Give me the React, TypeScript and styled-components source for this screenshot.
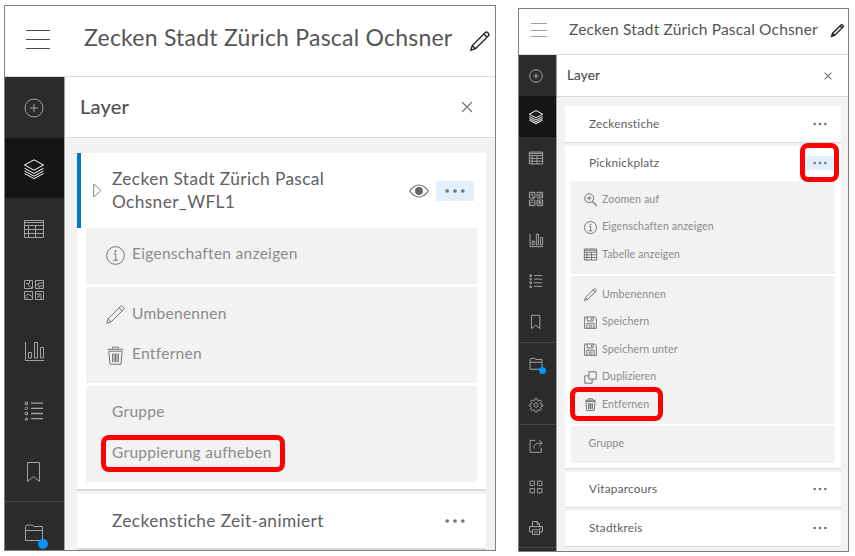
import React from "react";
import styled, { createGlobalStyle, css, ThemeProvider } from "styled-components";

const GlobalStyle = createGlobalStyle`
  * { box-sizing: border-box; }
  body { margin: 0; background: #fff; font-family: "Lato", sans-serif; overflow: hidden; }
`;

/* ---------- size sets for the two windows ---------- */

const large = {
  width: 492, height: 546,
  header: 71, headerPad: "0 5px 0 21px", titleGap: 34, titleSize: 23, titleTrack: 0.23, titleRaise: 7,
  burgerW: 24, burgerGap: 8, burgerDrop: 4, pencil: 20, pencilDrop: 3, burger: "#4a4a4a",
  rail: 60, cell: 60.6, cellPad: "2px 2px 0 0", railIcon: 20, dot: 10,
  panelHead: 61, panelPad: "0 22px 0 15px", headSize: 20, headTrack: 0.24, close: 12, headRaise: 2,
  listPad: "15px 9px 0 12px", cardGap: 3, cardEdge: 2,
  cardSize: 17.3, cardTrack: 0.38, cardLine: 22.5,
  textInset: 35, cardRight: 12, moreW: 38, moreH: 20, dots: 18,
  menuMargin: "0 9px 7px", sectionGap: 3, row: 40.5,
  itemSize: 15.5, itemTrack: 0.29, itemIcon: 19, iconInset: 20, iconGap: 7, plainInset: 26, iconDrop: 4,
};

const small: typeof large = {
  width: 331, height: 544,
  header: 46, headerPad: "0 4px 0 12px", titleGap: 22, titleSize: 15.5, titleTrack: 0.17, titleRaise: 4,
  burgerW: 16, burgerGap: 5.5, burgerDrop: 1, pencil: 13, pencilDrop: 1, burger: "#a0a0a0",
  rail: 38, cell: 41, cellPad: "0 4px 0 0", railIcon: 14, dot: 7,
  panelHead: 42, panelPad: "0 16px 0 10px", headSize: 13.5, headTrack: 0.14, close: 8, headRaise: 0,
  listPad: "9px 7px 0 8px", cardGap: 3, cardEdge: 1,
  cardSize: 11.8, cardTrack: 0.23, cardLine: 16,
  textInset: 24, cardRight: 8, moreW: 26, moreH: 14, dots: 14,
  menuMargin: "0 6px 5px", sectionGap: 2, row: 27.5,
  itemSize: 10.6, itemTrack: 0.13, itemIcon: 13, iconInset: 13, iconGap: 5, plainInset: 17.5, iconDrop: 2,
};

declare module "styled-components" {
  export interface DefaultTheme extends Record<string, any> {}
}

/* ---------- layout ---------- */

const Page = styled.div`
  display: flex;
  gap: 22px;
  padding-left: 4px;
  width: 855px;
  height: 556px;
`;

const Window = styled.section<{ $top: number }>`
  position: relative;
  display: flex;
  flex-direction: column;
  flex: none;
  width: ${p => p.theme.width}px;
  height: ${p => p.theme.height}px;
  margin-top: ${p => p.$top}px;
  border: 1px solid #7f7f7f;
  overflow: hidden;
`;

const Header = styled.header`
  display: flex;
  align-items: center;
  flex: none;
  height: ${p => p.theme.header}px;
  padding: ${p => p.theme.headerPad};
  padding-bottom: ${p => p.theme.titleRaise}px;
  border-bottom: 1px solid #dcdcdc;
`;

const Burger = styled.div`
  display: flex;
  flex-direction: column;
  gap: ${p => p.theme.burgerGap}px;
  width: ${p => p.theme.burgerW}px;
  margin-top: ${p => p.theme.burgerDrop}px;
  margin-right: ${p => p.theme.titleGap}px;
`;

const BurgerLine = styled.span`
  height: 1px;
  background: ${p => p.theme.burger};
`;

const Title = styled.h1`
  margin: 0 auto 0 0;
  font-size: ${p => p.theme.titleSize}px;
  font-weight: 400;
  line-height: 1.2;
  letter-spacing: ${p => p.theme.titleTrack}px;
  color: #555;
  white-space: nowrap;
`;

const TitleIcon = styled.span`
  display: flex;
  margin-top: ${p => p.theme.pencilDrop * 2}px;
  color: #222;
`;

const Body = styled.div`
  display: flex;
  flex: 1;
  min-height: 0;
`;

const Rail = styled.nav`
  flex: none;
  width: ${p => p.theme.rail}px;
  border-right: 1px solid #a3a3a3;
  background: #2b2b2b;
  overflow: hidden;
`;

const RailGroup = styled.div`
  & + & { border-top: 1px solid #474747; margin-bottom: -1px; }
`;

const RailCell = styled.div<{ $active?: boolean }>`
  display: flex;
  align-items: center;
  justify-content: center;
  height: ${p => p.theme.cell}px;
  padding: ${p => p.theme.cellPad};
  color: #a2a2a2;
  ${p => p.$active && css`background: #151515; color: #fff;`}
`;

const IconSlot = styled.span`
  position: relative;
  display: flex;
`;

const NoticeDot = styled.i`
  position: absolute;
  left: 74%;
  top: 76%;
  width: ${p => p.theme.dot}px;
  height: ${p => p.theme.dot}px;
  border-radius: 50%;
  background: #0095f6;
`;

const Panel = styled.main`
  display: flex;
  flex-direction: column;
  flex: 1;
  min-width: 0;
  background: #f2f2f2;
`;

const PanelHeader = styled.div`
  display: flex;
  align-items: center;
  justify-content: space-between;
  flex: none;
  height: ${p => p.theme.panelHead}px;
  padding: ${p => p.theme.panelPad};
  border-bottom: 1px solid #dcdcdc;
  background: #fff;
  color: #777;
`;

const PanelTitle = styled.h2`
  margin: 0;
  padding-bottom: ${p => p.theme.headRaise}px;
  font-size: ${p => p.theme.headSize}px;
  font-weight: 400;
  -webkit-text-stroke: 0.2px #505050;
  line-height: 1.2;
  letter-spacing: ${p => p.theme.headTrack}px;
  color: #505050;
`;

const List = styled.div`
  display: flex;
  flex-direction: column;
  gap: ${p => p.theme.cardGap}px;
  padding: ${p => p.theme.listPad};
`;

const Card = styled.article`
  flex: none;
  background: #fff;
  border-bottom: ${p => p.theme.cardEdge}px solid #dadada;
`;

const CardRow = styled.div<{ $h: number; $current?: boolean }>`
  display: flex;
  align-items: center;
  height: ${p => p.$h}px;
  padding-right: ${p => p.theme.cardRight}px;
  ${p => p.$current && css`border-left: 4px solid #0079c1;`}
`;

const Lead = styled.span<{ $indent: number }>`
  display: flex;
  flex: none;
  width: ${p => p.theme.textInset - p.$indent}px;
  padding-left: ${p => (p.$indent ? 12 : 0)}px;
`;

const CardLabel = styled.div`
  flex: 1;
  font-size: ${p => p.theme.cardSize}px;
  line-height: ${p => p.theme.cardLine}px;
  letter-spacing: ${p => p.theme.cardTrack}px;
  color: #606060;
  white-space: nowrap;
`;

const Eye = styled.span`
  display: flex;
  margin-right: 7px;
  padding-top: 1px;
`;

const More = styled.button<{ $on?: boolean }>`
  display: flex;
  align-items: center;
  justify-content: center;
  width: ${p => p.theme.moreW}px;
  height: ${p => p.theme.moreH}px;
  padding: 0;
  border: 0;
  background: ${p => (p.$on ? "#e1effa" : "transparent")};
`;

const Menu = styled.div`
  display: flex;
  flex-direction: column;
  gap: ${p => p.theme.sectionGap}px;
  margin: ${p => p.theme.menuMargin};
`;

const Section = styled.div<{ $h: number; $pad: number }>`
  height: ${p => p.$h}px;
  padding-top: ${p => p.$pad}px;
  background: #f2f2f2;
`;

const Item = styled.div<{ $plain?: boolean }>`
  display: flex;
  align-items: center;
  gap: ${p => p.theme.iconGap}px;
  height: ${p => p.theme.row}px;
  padding-left: ${p => (p.$plain ? p.theme.plainInset : p.theme.iconInset)}px;
  font-size: ${p => p.theme.itemSize}px;
  letter-spacing: ${p => p.theme.itemTrack}px;
  color: #8b8b8b;
  white-space: nowrap;
`;

const ItemIcon = styled.span`
  display: flex;
  padding-top: ${p => p.theme.iconDrop}px;
  color: #757575;
`;

const Marker = styled.div<{ $x: number; $y: number; $w: number; $h: number }>`
  position: absolute;
  left: ${p => p.$x}px;
  top: ${p => p.$y}px;
  width: ${p => p.$w}px;
  height: ${p => p.$h}px;
  border: 5px solid #fe0000;
  border-radius: 8px;
`;

/* ---------- icons, on a 20-unit grid ---------- */

const Svg = styled.svg`
  display: block;
  overflow: visible;
  fill: none;
  stroke: currentColor;
`;

const shapes: Record<string, React.ReactNode> = {
  add: <><circle cx="10" cy="10" r="9" /><path d="M10 6v8M6 10h8" /></>,
  layers: <><path d="M10 .8 19.5 6 10 11.200.5 6z" /><path d="M.5 9.300 10 14.500l9.500-5.200M.5 12 10 17.200 19.500 12M.5 14.500 10 19.600l9.500-5.100" /></>,
  table: <path d="M.5 1.500h19v17H.5zM.5 6.500h19M.5 10.500h19M.5 14.500h19M4.500 6.500v12M11.500 6.500v12M.5 3.500h19" />,
  basemap: <><path d="M.5.5h8v8h-8zM11.500.5h8v8h-8zM.5 11.500h8v8h-8zM11.500 11.500h8v8h-8z" /><path d="M2 3.500h2.500v2L8 8M5.500 1v2.500M12 4.800h2.500V3H19M15 8V6h4M1 16.500l3-2.500 4 2.500M3 19v-2M12 14h5v5M15 14v3h-2" /></>,
  chart: <path d="M1.500 1v18.500H20M4.500 17v-5.500h3V17zM10.500 17V1.500h3V17zM16.500 17V6.500h3V17z" />,
  legend: <><path d="M7 2.200h12M7 7.400h12M7 12.500h12M7 17.700h12" strokeWidth="1.300" /><path d="M1.200 1.200h2.300v2.300H1.200zM1.200 11.400h2.300v2.300H1.200zM2.400 16.300 3.800 19H1z" /><circle cx="2.400" cy="7.400" r="1.300" /></>,
  bookmark: <path d="M3.500.5h12v19l-6-5-6 5z" />,
  folder: <path d="M1.500 17.500V4L2.700 2h6l1 1.500h8.800v14zM1.500 7.500h17" />,
  gear: <><circle cx="10" cy="10" r="3" /><path d="M8.500.8h3l.5 2.700 1.800.8L16 2.700 18 5l-1.500 2 .7 2 2.300.3v2.500l-2.500.6-.8 1.700 1.500 2.200-2 2-2.200-1.500-1.800.8-.5 2.300h-2.700l-.6-2.400-1.700-.8-2.200 1.500-2-2 1.500-2.200-.8-1.700L.5 11.600V9.200l2.500-.6.700-1.700L2.200 4.600l2-1.900 2.200 1.500L8 3.500z" /></>,
  share: <path d="M9 2H1.500v17h16v-6.500M7 13.500c0-5 2-7.500 8-7.500h3.500M14.500 1.500 19 6l-4.500 4.500" />,
  apps: <path d="M1.500 1.500h6.200v6.200H1.500zM12.300 1.500h6.200v6.200h-6.200zM1.500 12.300h6.200v6.200H1.500zM12.300 12.300h6.200v6.200h-6.200z" />,
  print: <path d="M5 8V.8h7L15 4v4M11.500.8V4.500H15M5 15.500H.8V8h18.400v7.500H15M5 12.500h10v6.700H5zM7.500 16h5M15 10.300h2" />,
  pencil: <path d="M.8 19.200 2.300 14.500 15.300 1.500q1.200-1 2.300 0l.9.900q1.100 1.200 0 2.300L5.500 17.700zM13.800 3 17 6.200M2.300 14.500l3.200 3.200" />,
  info: <><circle cx="10" cy="10" r="9.300" /><path d="M7.800 8.300h2.500V15M7.500 15h5.200" /><circle cx="10" cy="5.400" r=".7" fill="currentColor" /></>,
  trash: <><path d="M1.500 3.500h17M7 3V1.200h6V3M3 5.500h14L15.800 19.200H4.200z" /><path d="M7 8h6v9H7z" fill="#b9b4ae" stroke="none" /><path d="M7 8v9M10 8v9M13 8v9" /></>,
  zoom: <><circle cx="8" cy="8" r="6.800" /><path d="M8 4.600v6.800M4.600 8h6.800" /><path d="M13 13l6.500 6.500" strokeWidth="2" /></>,
  save: <path d="M1 1.500h15.500L19 4v15H1zM5 1.500v6h9v-6M11.500 3v3M4.500 19v-8h11v8M7 14h6M7 17h6" />,
  copy: <path d="M7.500 1.200h11.300v11.300H7.500zM7.500 7.500H1.200v11.300h11.300v-6.300" />,
};

type IconProps = { name: string; size: number; weight?: number };
const Icon = ({ name, size, weight = 1 }: IconProps) => (
  <Svg width={size} height={size} viewBox="0 0 20 20" strokeWidth={(weight * 20) / size}>{shapes[name]}</Svg>
);

const Dots = ({ size }: { size: number }) => (
  <Svg width={size} height="4" viewBox={`0 0 ${size} 4`}>
    {[-1, 0, 1].map(i => (
      <circle key={i} cx={size / 2 + i * (size > 15 ? 7.8 : 5.3)} cy="2" r={size > 15 ? 1.8 : 1.3} fill="#737373" stroke="none" />
    ))}
  </Svg>
);

const Close = ({ size }: { size: number }) => (
  <Svg width={size} height={size} viewBox="0 0 10 10" strokeWidth={12 / size}><path d="M.8.8l8.400 8.400M9.200.8.8 9.200" /></Svg>
);

/* ---------- parts ---------- */

type Size = typeof large;

const RailIcons = ({ t, groups, active }: { t: Size; groups: string[][]; active: string }) => (
  <Rail>
    {groups.map((g, i) => (
      <RailGroup key={i}>
        {g.map(n => (
          <RailCell key={n} $active={n === active}>
            <IconSlot><Icon name={n} size={t.railIcon} />{n === "folder" && <NoticeDot />}</IconSlot>
          </RailCell>
        ))}
      </RailGroup>
    ))}
  </Rail>
);

type Entry = { icon?: string; label: string };
const MenuSection = ({ t, height, pad, items }: { t: Size; height: number; pad: number; items: Entry[] }) => (
  <Section $h={height} $pad={pad}>
    {items.map(e => (
      <Item key={e.label} $plain={!e.icon}>
        {e.icon && <ItemIcon><Icon name={e.icon} size={t.itemIcon} /></ItemIcon>}
        {e.label}
      </Item>
    ))}
  </Section>
);

const LayerRow = ({ t, label, height, on }: { t: Size; label: string; height: number; on?: boolean }) => (
  <CardRow $h={height}>
    <Lead $indent={0} />
    <CardLabel>{label}</CardLabel>
    <More $on={on}><Dots size={t.dots} /></More>
  </CardRow>
);

type ShellProps = { t: Size; top: number; groups: string[][]; children: React.ReactNode; markers: React.ReactNode };
const Shell = ({ t, top, groups, children, markers }: ShellProps) => (
  <ThemeProvider theme={t}>
    <Window $top={top}>
      <Header>
        <Burger><BurgerLine /><BurgerLine /><BurgerLine /></Burger>
        <Title>Zecken Stadt Zürich Pascal Ochsner</Title>
        <TitleIcon><Icon name="pencil" size={t.pencil} weight={1.4} /></TitleIcon>
      </Header>
      <Body>
        <RailIcons t={t} groups={groups} active="layers" />
        <Panel>
          <PanelHeader><PanelTitle>Layer</PanelTitle><Close size={t.close} /></PanelHeader>
          <List>{children}</List>
        </Panel>
      </Body>
      {markers}
    </Window>
  </ThemeProvider>
);

const mainTools = ["add", "layers", "table", "basemap", "chart", "legend", "bookmark"];

export default function App() {
  return (
    <Page>
      <GlobalStyle />
      <Shell t={large} top={5} groups={[mainTools, ["folder"]]} markers={<Marker $x={96} $y={429} $w={184} $h={37} />}>
        <Card>
          <CardRow $h={75} $current>
            <Lead $indent={4}>
              <Svg width="9" height="15" viewBox="0 0 9 15" color="#888"><path d="M.7 1v13L8 7.500z" /></Svg>
            </Lead>
            <CardLabel>Zecken Stadt Zürich Pascal<br />Ochsner_WFL1</CardLabel>
            <Eye>
              <Svg width="20" height="14" viewBox="0 0 20 14" color="#6c6c6c">
                <path d="M.7 7Q5 1 10 1t9.300 6Q15 13 10 13T.7 7z" strokeWidth="1.200" />
                <circle cx="10" cy="7" r="3.900" fill="#666" stroke="none" />
              </Svg>
            </Eye>
            <More $on><Dots size={large.dots} /></More>
          </CardRow>
          <Menu>
            <MenuSection t={large} height={56} pad={5} items={[{ icon: "info", label: "Eigenschaften anzeigen" }]} />
            <MenuSection t={large} height={96} pad={5.5} items={[{ icon: "pencil", label: "Umbenennen" }, { icon: "trash", label: "Entfernen" }]} />
            <MenuSection t={large} height={96} pad={5} items={[{ label: "Gruppe" }, { label: "Gruppierung aufheben" }]} />
          </Menu>
        </Card>
        <Card><LayerRow t={large} label="Zeckenstiche Zeit-animiert" height={54} /></Card>
      </Shell>

      <Shell
        t={small}
        top={8}
        groups={[mainTools, ["folder", "gear"], ["share", "apps", "print"], []]}
        markers={<><Marker $x={281} $y={134} $w={39} $h={39} /><Marker $x={51} $y={378} $w={93} $h={34} /></>}
      >
        <Card><LayerRow t={small} label="Zeckenstiche" height={35.5} /></Card>
        <Card>
          <LayerRow t={small} label="Picknickplatz" height={35} on />
          <Menu>
            <MenuSection t={small} height={93} pad={4.6} items={[
              { icon: "zoom", label: "Zoomen auf" },
              { icon: "info", label: "Eigenschaften anzeigen" },
              { icon: "table", label: "Tabelle anzeigen" },
            ]} />
            <MenuSection t={small} height={148} pad={4.5} items={[
              { icon: "pencil", label: "Umbenennen" },
              { icon: "save", label: "Speichern" },
              { icon: "save", label: "Speichern unter" },
              { icon: "copy", label: "Duplizieren" },
              { icon: "trash", label: "Entfernen" },
            ]} />
            <MenuSection t={small} height={37} pad={4} items={[{ label: "Gruppe" }]} />
          </Menu>
        </Card>
        <Card><LayerRow t={small} label="Vitaparcours" height={35} /></Card>
        <Card><LayerRow t={small} label="Stadtkreis" height={35} /></Card>
      </Shell>
    </Page>
  );
}
